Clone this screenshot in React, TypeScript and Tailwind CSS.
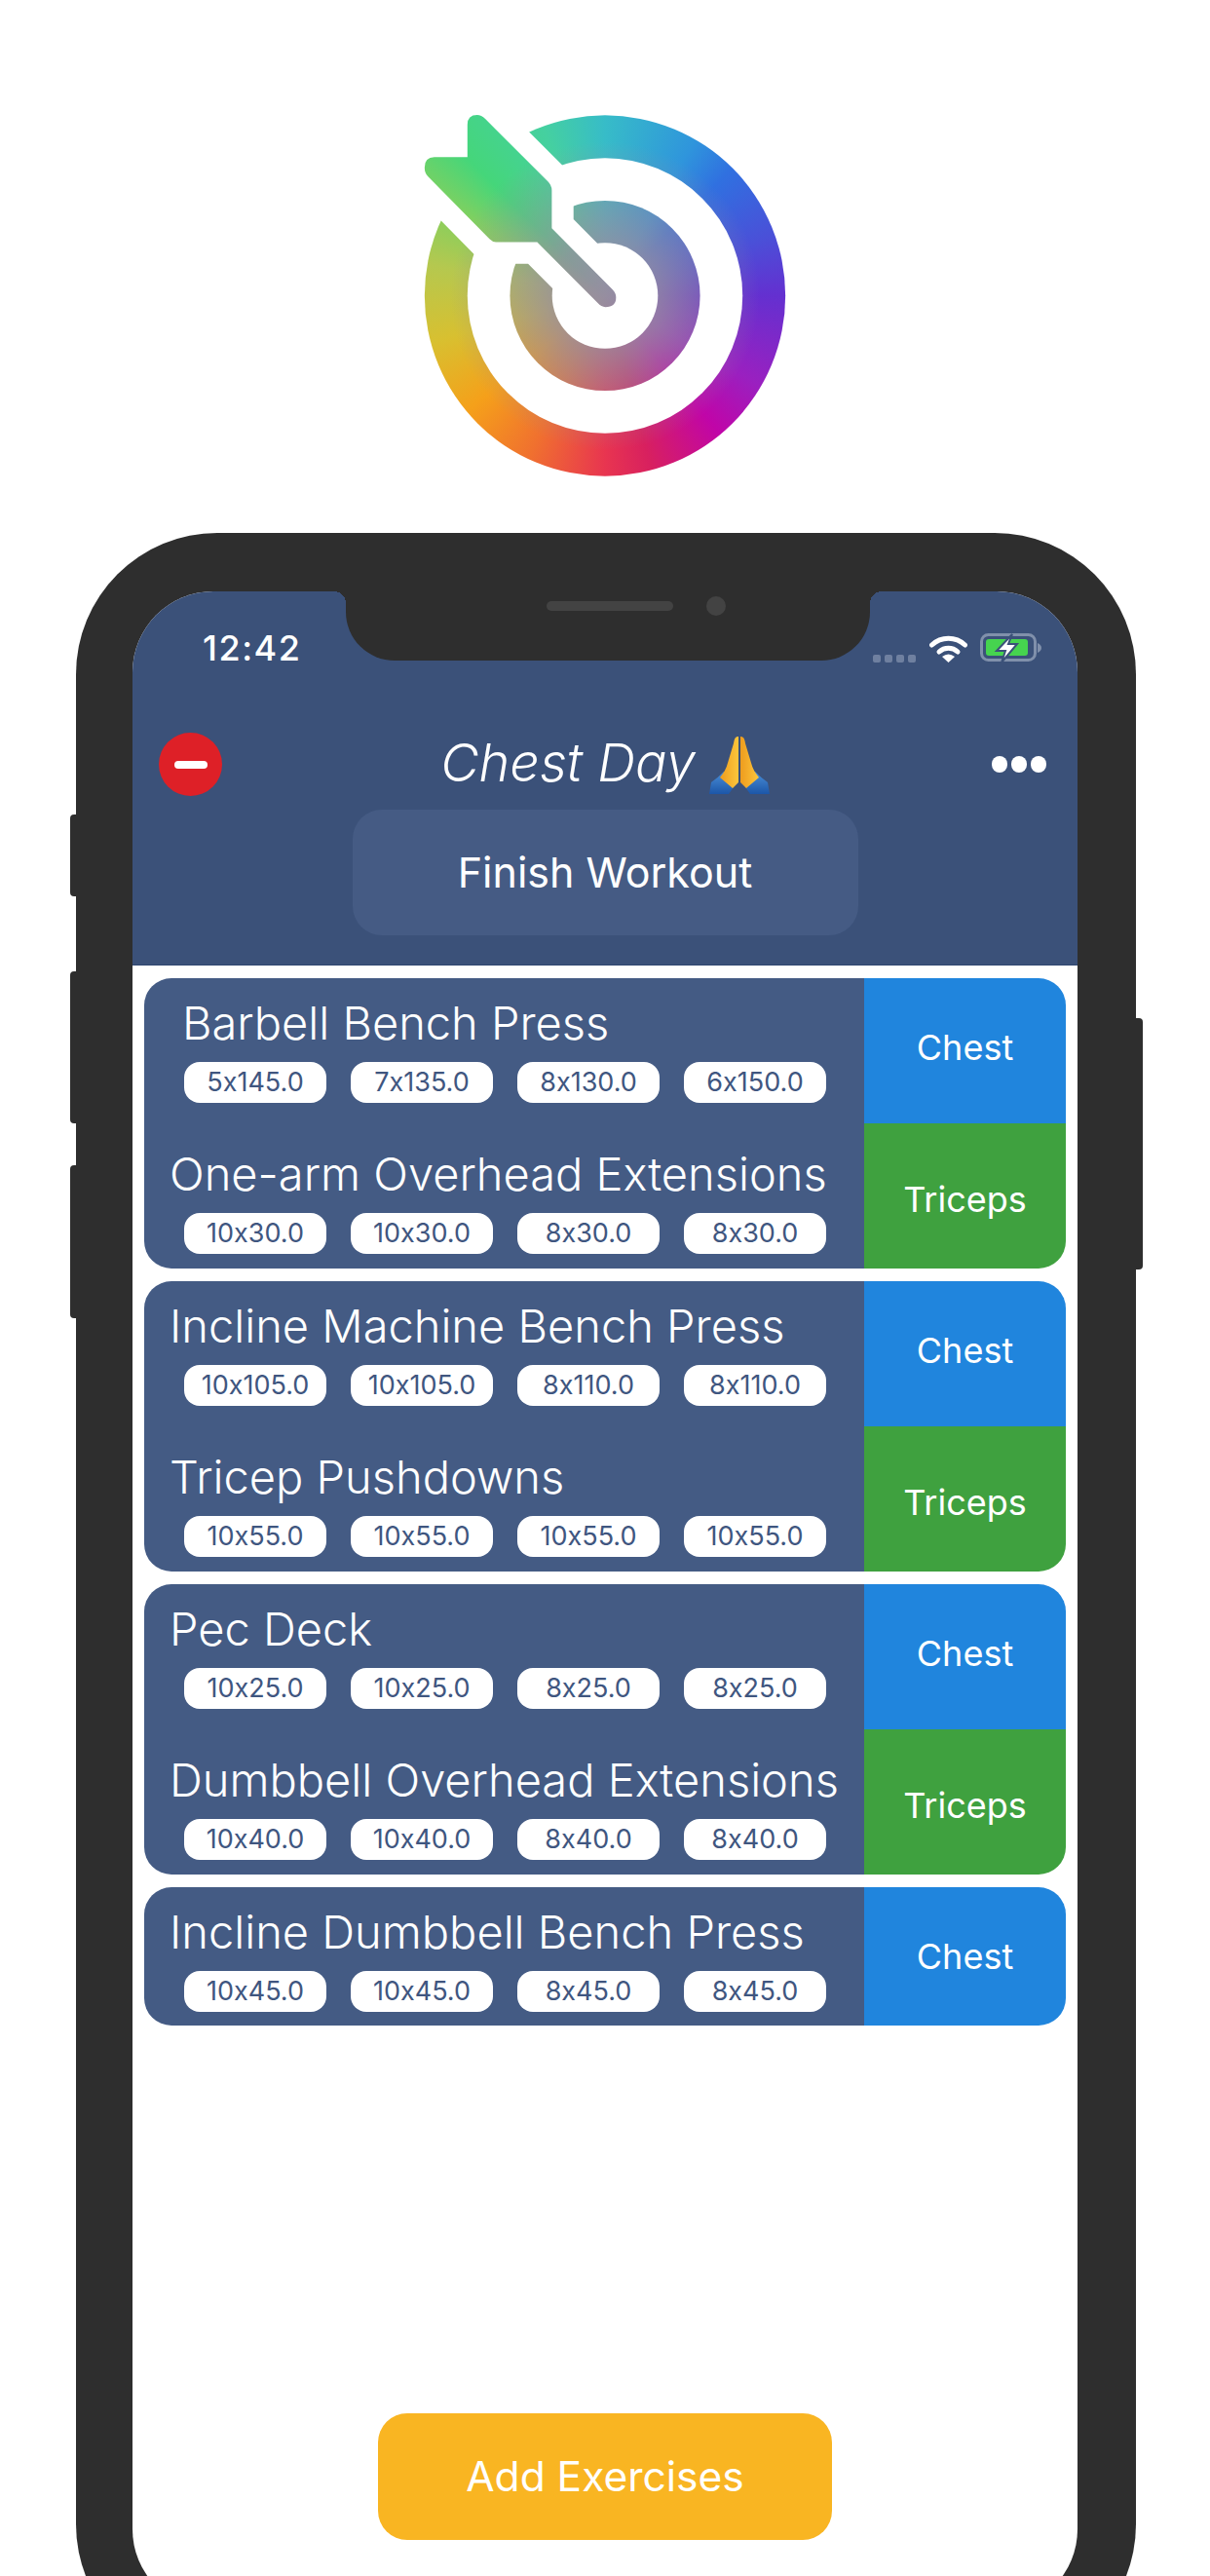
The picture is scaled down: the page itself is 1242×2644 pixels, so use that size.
import React from 'react';

type Row = { name: string; sets: string[]; tag: 'Chest' | 'Triceps'; indent?: boolean };

const groups: Row[][] = [
  [
    { name: 'Barbell Bench Press', sets: ['5x145.0', '7x135.0', '8x130.0', '6x150.0'], tag: 'Chest', indent: true },
    { name: 'One-arm Overhead Extensions', sets: ['10x30.0', '10x30.0', '8x30.0', '8x30.0'], tag: 'Triceps' },
  ],
  [
    { name: 'Incline Machine Bench Press', sets: ['10x105.0', '10x105.0', '8x110.0', '8x110.0'], tag: 'Chest' },
    { name: 'Tricep Pushdowns', sets: ['10x55.0', '10x55.0', '10x55.0', '10x55.0'], tag: 'Triceps' },
  ],
  [
    { name: 'Pec Deck', sets: ['10x25.0', '10x25.0', '8x25.0', '8x25.0'], tag: 'Chest' },
    { name: 'Dumbbell Overhead Extensions', sets: ['10x40.0', '10x40.0', '8x40.0', '8x40.0'], tag: 'Triceps' },
  ],
  [{ name: 'Incline Dumbbell Bench Press', sets: ['10x45.0', '10x45.0', '8x45.0', '8x45.0'], tag: 'Chest' }],
];

const ARROW =
  'M237 113 Q237 83 267 83 Q280 83 292 95 L485 288 Q497 300 497 315 L497 432 L683 620 Q695 632 695 645 Q695 675 662 675 Q650 675 638 662 L452 475 L325 475 Q315 475 305 465 L115 272 Q105 262 105 245 Q105 213 135 213 L237 213 Z';

const Logo = () => (
  <svg viewBox="100 80 1122 1120" className="w-[374px] h-[373px] block">
    <defs>
      <mask id="target" maskUnits="userSpaceOnUse" x="100" y="80" width="1122" height="1120">
        <circle cx="661" cy="640" r="556" fill="white" />
        <circle cx="661" cy="640" r="424" fill="black" />
        <circle cx="661" cy="640" r="293" fill="white" />
        <circle cx="661" cy="640" r="163" fill="black" />
        <path d={ARROW} fill="black" stroke="black" strokeWidth="134" strokeLinejoin="miter" strokeMiterlimit="4" />
        <path d={ARROW} fill="white" />
      </mask>
    </defs>
    <g mask="url(#target)">
      <foreignObject x="100" y="80" width="1122" height="1120">
        <div className="w-full h-full bg-[radial-gradient(circle_closest-side,#968ea0_0%,#968ea0cc_30%,#968ea000_85%),conic-gradient(from_0deg,#37bcc8_0deg,#2f95dc_30deg,#3070e0_45deg,#4a50d8_70deg,#6430d0_90deg,#9a20c0_120deg,#c005a8_140deg,#d8205f_165deg,#e83550_180deg,#f0702f_205deg,#f5a01a_230deg,#d8c030_255deg,#b5c84f_280deg,#7fd060_300deg,#45d67a_315deg,#45d0a0_340deg,#37bcc8_360deg)]" />
      </foreignObject>
    </g>
  </svg>
);

const Wifi = () => (
  <svg viewBox="0 0 39 28" className="w-[39px] h-[28px]">
    <path d="M2.5 10 A 25 25 0 0 1 36.5 10" fill="none" stroke="white" strokeWidth="5" strokeLinecap="round" />
    <path d="M10 17 A 14 14 0 0 1 29 17" fill="none" stroke="white" strokeWidth="5" strokeLinecap="round" />
    <path d="M13 22 Q19.5 17 26 22 L19.5 28 Z" fill="white" />
  </svg>
);

const Battery = () => (
  <svg viewBox="0 0 63 30" className="w-[63px] h-[30px]">
    <rect x="1.5" y="1.5" width="55" height="26" rx="7" fill="none" stroke="#8090ab" strokeWidth="3" />
    <rect x="6" y="6" width="43" height="17" rx="3" fill="#46d44f" />
    <path d="M59 10 Q63 12 63 15 Q63 18 59 20 Z" fill="#8090ab" />
    <path d="M33 1 L17 18 L26 18 L22 30 L38 11 L29 11 Z" fill="white" stroke="#3b5179" strokeWidth="2" />
  </svg>
);

const PrayingHands = () => (
  <svg viewBox="0 0 62 60" className="w-[62px] h-[60px]">
    <defs>
      <linearGradient id="sleeve" x1="0" y1="0" x2="0" y2="1">
        <stop offset="0" stopColor="#4a8fd8" />
        <stop offset="1" stopColor="#1c56a8" />
      </linearGradient>
      <linearGradient id="hand" x1="0" y1="0" x2="1" y2="0">
        <stop offset="0" stopColor="#ee9c1e" />
        <stop offset="1" stopColor="#fcc63c" />
      </linearGradient>
    </defs>
    <path d="M0 60 L2 48 Q8 44 15 37 L27 50 L20 60 Z" fill="url(#sleeve)" />
    <path d="M62 60 L60 48 Q54 44 47 37 L35 50 L42 60 Z" fill="url(#sleeve)" />
    <path d="M30 1 Q26 0 25 8 L19 28 Q17 36 11 43 L24 54 L30 48 Z" fill="url(#hand)" />
    <path d="M32 1 Q36 0 37 8 L43 28 Q45 36 51 43 L38 54 L32 48 Z" fill="url(#hand)" />
  </svg>
);

const Notch = () => (
  <div className="absolute top-0 left-[219px] w-[538px] h-[71px] bg-[#2e2e2e] rounded-b-[50px] flex items-center gap-[34px] pl-[206px] pb-[41px]">
    <span className="absolute top-0 left-[-12px] w-[12px] h-[12px] bg-[radial-gradient(circle_at_0_100%,transparent_12px,#2e2e2e_12px)]" />
    <span className="absolute top-0 right-[-12px] w-[12px] h-[12px] bg-[radial-gradient(circle_at_100%_100%,transparent_12px,#2e2e2e_12px)]" />
    <div className="w-[130px] h-[10px] rounded-full bg-[#434343]" />
    <div className="w-[20px] h-[20px] rounded-full bg-[#434343]" />
  </div>
);

const Header = () => (
  <header className="h-[384px] bg-[#3b5179] shrink-0 border-b border-[#2f4670]">
    <div className="h-[145px] pt-[40px] pl-[72px] pr-[37px] flex justify-between items-start">
      <span className="text-[36px] leading-[36px] font-medium tracking-[1.5px] text-white">12:42</span>
      <div className="flex items-end mt-[3px]">
        <div className="flex gap-[4px] mr-[14px]">
          {[0, 1, 2, 3].map((i) => (
            <span key={i} className="w-[8px] h-[8px] rounded-[2px] bg-[#6f80a0]" />
          ))}
        </div>
        <div className="mr-[13px] flex"><Wifi /></div>
        <div className="flex"><Battery /></div>
      </div>
    </div>
    <div className="h-[65px] flex items-center px-[27px]">
      <div className="w-[65px] h-[65px] rounded-full bg-[#de2027] flex items-center justify-center">
        <div className="w-[34px] h-[8px] rounded-full bg-white" />
      </div>
      <div className="flex-1 flex items-center justify-center gap-[14px]">
        <span className="text-[54px] leading-[60px] mb-[4px] italic font-light text-white">Chest Day</span>
        <PrayingHands />
      </div>
      <div className="w-[65px] flex gap-[4px] pl-[4px]">
        <span className="w-[16px] h-[17px] rounded-full bg-white shrink-0" />
        <span className="w-[16px] h-[17px] rounded-full bg-white shrink-0" />
        <span className="w-[16px] h-[17px] rounded-full bg-white shrink-0" />
      </div>
    </div>
    <button className="mt-[14px] mx-auto w-[519px] h-[129px] rounded-[30px] bg-[#455b84] text-white text-[43px] flex items-center justify-center">
      Finish Workout
    </button>
  </header>
);

const ExerciseRow = ({ row, pos }: { row: Row; pos: 'first' | 'second' | 'only' }) => (
  <div className={pos === 'only' ? 'flex h-[142px]' : 'flex h-[149px]'}>
    <div className={pos === 'second' ? 'w-[739px] bg-[#445b84] pt-[24px]' : 'w-[739px] bg-[#445b84] pt-[18px]'}>
      <div className={row.indent ? 'pl-[39px] text-[47px] leading-[56px] font-light text-white whitespace-nowrap' : 'pl-[26px] text-[47px] leading-[56px] font-light text-white whitespace-nowrap'}>
        {row.name}
      </div>
      <div className="mt-[12px] pl-[41px] flex gap-[25px]">
        {row.sets.map((s, i) => (
          <span key={i} className="w-[146px] h-[42px] rounded-[16px] bg-white text-[#3f5680] text-[27px] leading-[42px] text-center">
            {s}
          </span>
        ))}
      </div>
    </div>
    <div
      className={
        (row.tag === 'Chest' ? 'bg-[#2085dd] ' : 'bg-[#3fa13f] ') +
        (pos === 'first' ? 'pb-[7px] ' : pos === 'second' ? 'pt-[7px] ' : '') +
        'w-[207px] flex items-center justify-center text-white text-[36px]'
      }
    >
      {row.tag}
    </div>
  </div>
);

const App: React.FC = () => {
  return (
    <div className="w-[1242px] h-[2644px] overflow-hidden bg-white font-['Inter',sans-serif] [font-feature-settings:'calt'_0]">
      <div className="pt-[117px] pl-[434px] h-[547px]">
        <Logo />
      </div>

      <div className="relative ml-[78px] w-[1088px] h-[2189px] bg-[#2e2e2e] rounded-[145px] pt-[60px] pl-[58px] pr-[60px] pb-[57px]">
        <div className="absolute left-[-6px] top-[289px] w-[8px] h-[84px] bg-[#2e2e2e] rounded-l-[4px]" />
        <div className="absolute left-[-6px] top-[450px] w-[8px] h-[156px] bg-[#2e2e2e] rounded-l-[4px]" />
        <div className="absolute left-[-6px] top-[649px] w-[8px] h-[157px] bg-[#2e2e2e] rounded-l-[4px]" />
        <div className="absolute right-[-7px] top-[498px] w-[8px] h-[258px] bg-[#2e2e2e] rounded-r-[4px]" />

        <div className="relative h-full rounded-[83px] overflow-hidden bg-white flex flex-col">
          <Header />
          <Notch />
          <div className="px-[12px] pt-[13px] flex flex-col gap-[13px]">
            {groups.map((g, i) => (
              <div key={i} className="rounded-[28px] overflow-hidden">
                {g.map((row, j) => (
                  <ExerciseRow key={j} row={row} pos={g.length === 1 ? 'only' : j === 0 ? 'first' : 'second'} />
                ))}
              </div>
            ))}
          </div>
          <button className="mt-auto mb-[72px] mx-auto w-[466px] h-[130px] rounded-[30px] bg-[#f9b522] text-white text-[42.5px] flex items-center justify-center">
            Add Exercises
          </button>
        </div>
      </div>
    </div>
  );
};

export default App;
